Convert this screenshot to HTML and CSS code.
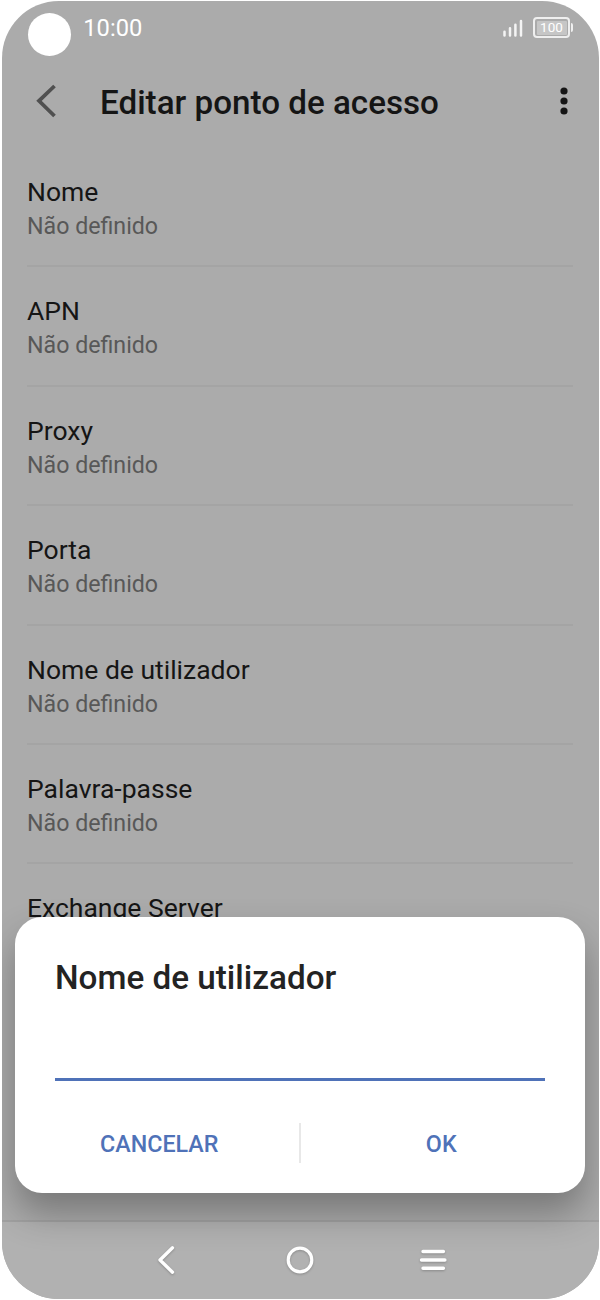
FILE: index.html
```html
<!DOCTYPE html>
<html lang="pt">
<head>
<meta charset="utf-8">
<title>Editar ponto de acesso</title>
<link rel="stylesheet" href="styles.css">
</head>
<body>
<main class="screen">
  <header class="status">
    <span class="camera"></span>
    <span class="clock">10:00</span>
    <svg class="signal" width="20" height="18" viewBox="0 0 20 18"><path d="M1.5 16.5v-3.8M7 16.5V9.3M12.4 16.5V5.8M18 16.5V2" stroke="#f4f4f4" stroke-width="2.5" stroke-linecap="round"/></svg>
    <span class="battery"><span class="charge">100</span></span>
  </header>
  <div class="appbar">
    <svg class="back" width="22" height="34" viewBox="0 0 22 34"><path d="M18.5 2 3 16.8 18.5 32" fill="none" stroke="#505050" stroke-width="3.8"/></svg>
    <h1 class="title"><span>Editar ponto de acesso</span></h1>
    <svg class="more" width="8" height="28" viewBox="0 0 8 28"><g fill="#151515"><circle cx="4" cy="4" r="3.6"/><circle cx="4" cy="14" r="3.6"/><circle cx="4" cy="24" r="3.6"/></g></svg>
  </div>
  <ul class="list">
    <li class="item"><span class="name">Nome</span><span class="value">Não definido</span></li>
    <li class="item"><span class="name">APN</span><span class="value">Não definido</span></li>
    <li class="item"><span class="name">Proxy</span><span class="value">Não definido</span></li>
    <li class="item"><span class="name">Porta</span><span class="value">Não definido</span></li>
    <li class="item"><span class="name">Nome de utilizador</span><span class="value">Não definido</span></li>
    <li class="item"><span class="name">Palavra-passe</span><span class="value">Não definido</span></li>
    <li class="item"><span class="name">Exchange Server</span></li>
  </ul>
  <nav class="navbar">
    <svg class="key" width="30" height="34" viewBox="0 0 30 34"><path d="M20.5 4.8 8 17 20.5 29.2" fill="none" stroke="#fff" stroke-width="3.3" stroke-linecap="round" stroke-linejoin="round"/></svg>
    <svg class="key" width="30" height="34" viewBox="0 0 30 34"><circle cx="15" cy="17" r="11.8" fill="none" stroke="#fff" stroke-width="3.2"/></svg>
    <svg class="key" width="30" height="34" viewBox="0 0 30 34"><path d="M5 8.5h20.4M3.5 17h23.4M5 25.3h20.4" stroke="#fff" stroke-width="3.4" stroke-linecap="round"/></svg>
  </nav>
  <section class="dialog">
    <h2 class="heading">Nome de utilizador</h2>
    <div class="field"></div>
    <div class="actions">
      <span class="action">CANCELAR</span>
      <span class="divider"></span>
      <span class="action">OK</span>
    </div>
  </section>
</main>
</body>
</html>
```
FILE: styles.css
```css
* { box-sizing: border-box; }
body {
  margin: 0;
  padding: 1px 1.5px;
  height: 1300px;
  background: #fff;
  font-family: Roboto, sans-serif;
  overflow: hidden;
}
.screen {
  position: relative;
  display: flex;
  flex-direction: column;
  height: 1298px;
  border-radius: 57px;
  background: #ababab;
  overflow: hidden;
}
.status {
  display: flex;
  align-items: flex-start;
  height: 66px;
  padding: 12px 25px 0 26px;
}
.camera {
  width: 43.4px;
  height: 43.4px;
  border-radius: 50%;
  background: #fff;
}
.clock {
  margin: 1px auto 0 12.4px;
  font-size: 23.7px;
  line-height: 28px;
  color: #fff;
}
.signal { margin: 6px 10px 0 0; }
.battery {
  position: relative;
  width: 37px;
  height: 21px;
  margin: 4px 3.5px 0 0;
  padding: 1.5px;
  border: 2px solid #efefef;
  border-radius: 4px;
}
.battery::after {
  content: "";
  position: absolute;
  right: -5px;
  top: 4px;
  width: 2.5px;
  height: 9px;
  border-radius: 0 2px 2px 0;
  background: #efefef;
}
.charge {
  display: block;
  height: 14px;
  border-radius: 1px;
  background: #c6c6c6;
  color: #fff;
  font-size: 13.5px;
  line-height: 13px;
  text-align: center;
}
.appbar {
  display: flex;
  align-items: center;
  height: 70px;
  padding: 0 31px 2px 34px;
}
.title {
  flex: 1;
  margin: 4px 0 0 42.5px;
  color: #151515;
  font-size: 33.2px;
  font-weight: 500;
  line-height: 40px;
  white-space: nowrap;
}
.list {
  flex: 1;
  min-height: 0;
  margin: 0;
  padding: 11px 25.5px 0;
  list-style: none;
  overflow: hidden;
}
.item {
  display: flex;
  flex-direction: column;
  height: 119.4px;
  padding-top: 27px;
  border-bottom: 2px solid #a4a4a4;
}
.name {
  height: 34px;
  color: #151515;
  font-size: 26.5px;
  line-height: 33px;
}
.value {
  color: #585858;
  font-size: 23.2px;
  line-height: 34px;
}
.navbar {
  display: flex;
  justify-content: center;
  gap: 103px;
  height: 79.5px;
  padding-top: 21.5px;
  border-top: 2px solid #a1a1a1;
  background: #b1b1b1;
}
.key { filter: drop-shadow(0 1.5px 1px rgba(0, 0, 0, .22)); }
.dialog {
  position: absolute;
  left: 13.5px;
  right: 13.5px;
  top: 916px;
  height: 276px;
  padding: 40px 40px 0;
  border-radius: 27px;
  background: #fff;
  box-shadow: 0 20px 36px rgba(0, 0, 0, .3);
}
.heading {
  margin: 0;
  color: #232323;
  font-size: 33.25px;
  font-weight: 500;
  line-height: 42px;
}
.field {
  height: 81.5px;
  border-bottom: 3px solid #4f72b8;
}
.actions {
  display: grid;
  grid-template-columns: 1fr 2px 1fr;
  align-items: center;
  height: 40px;
  margin: 42.5px -19px 0;
}
.action {
  padding-top: 2px;
  color: #4f72b8;
  font-size: 23.3px;
  font-weight: 500;
  text-align: center;
}
.action:first-child { padding-right: 16.5px; }
.action:last-child { padding-left: 17.5px; }
.divider { height: 40px; background: #e8e8e8; }
```
